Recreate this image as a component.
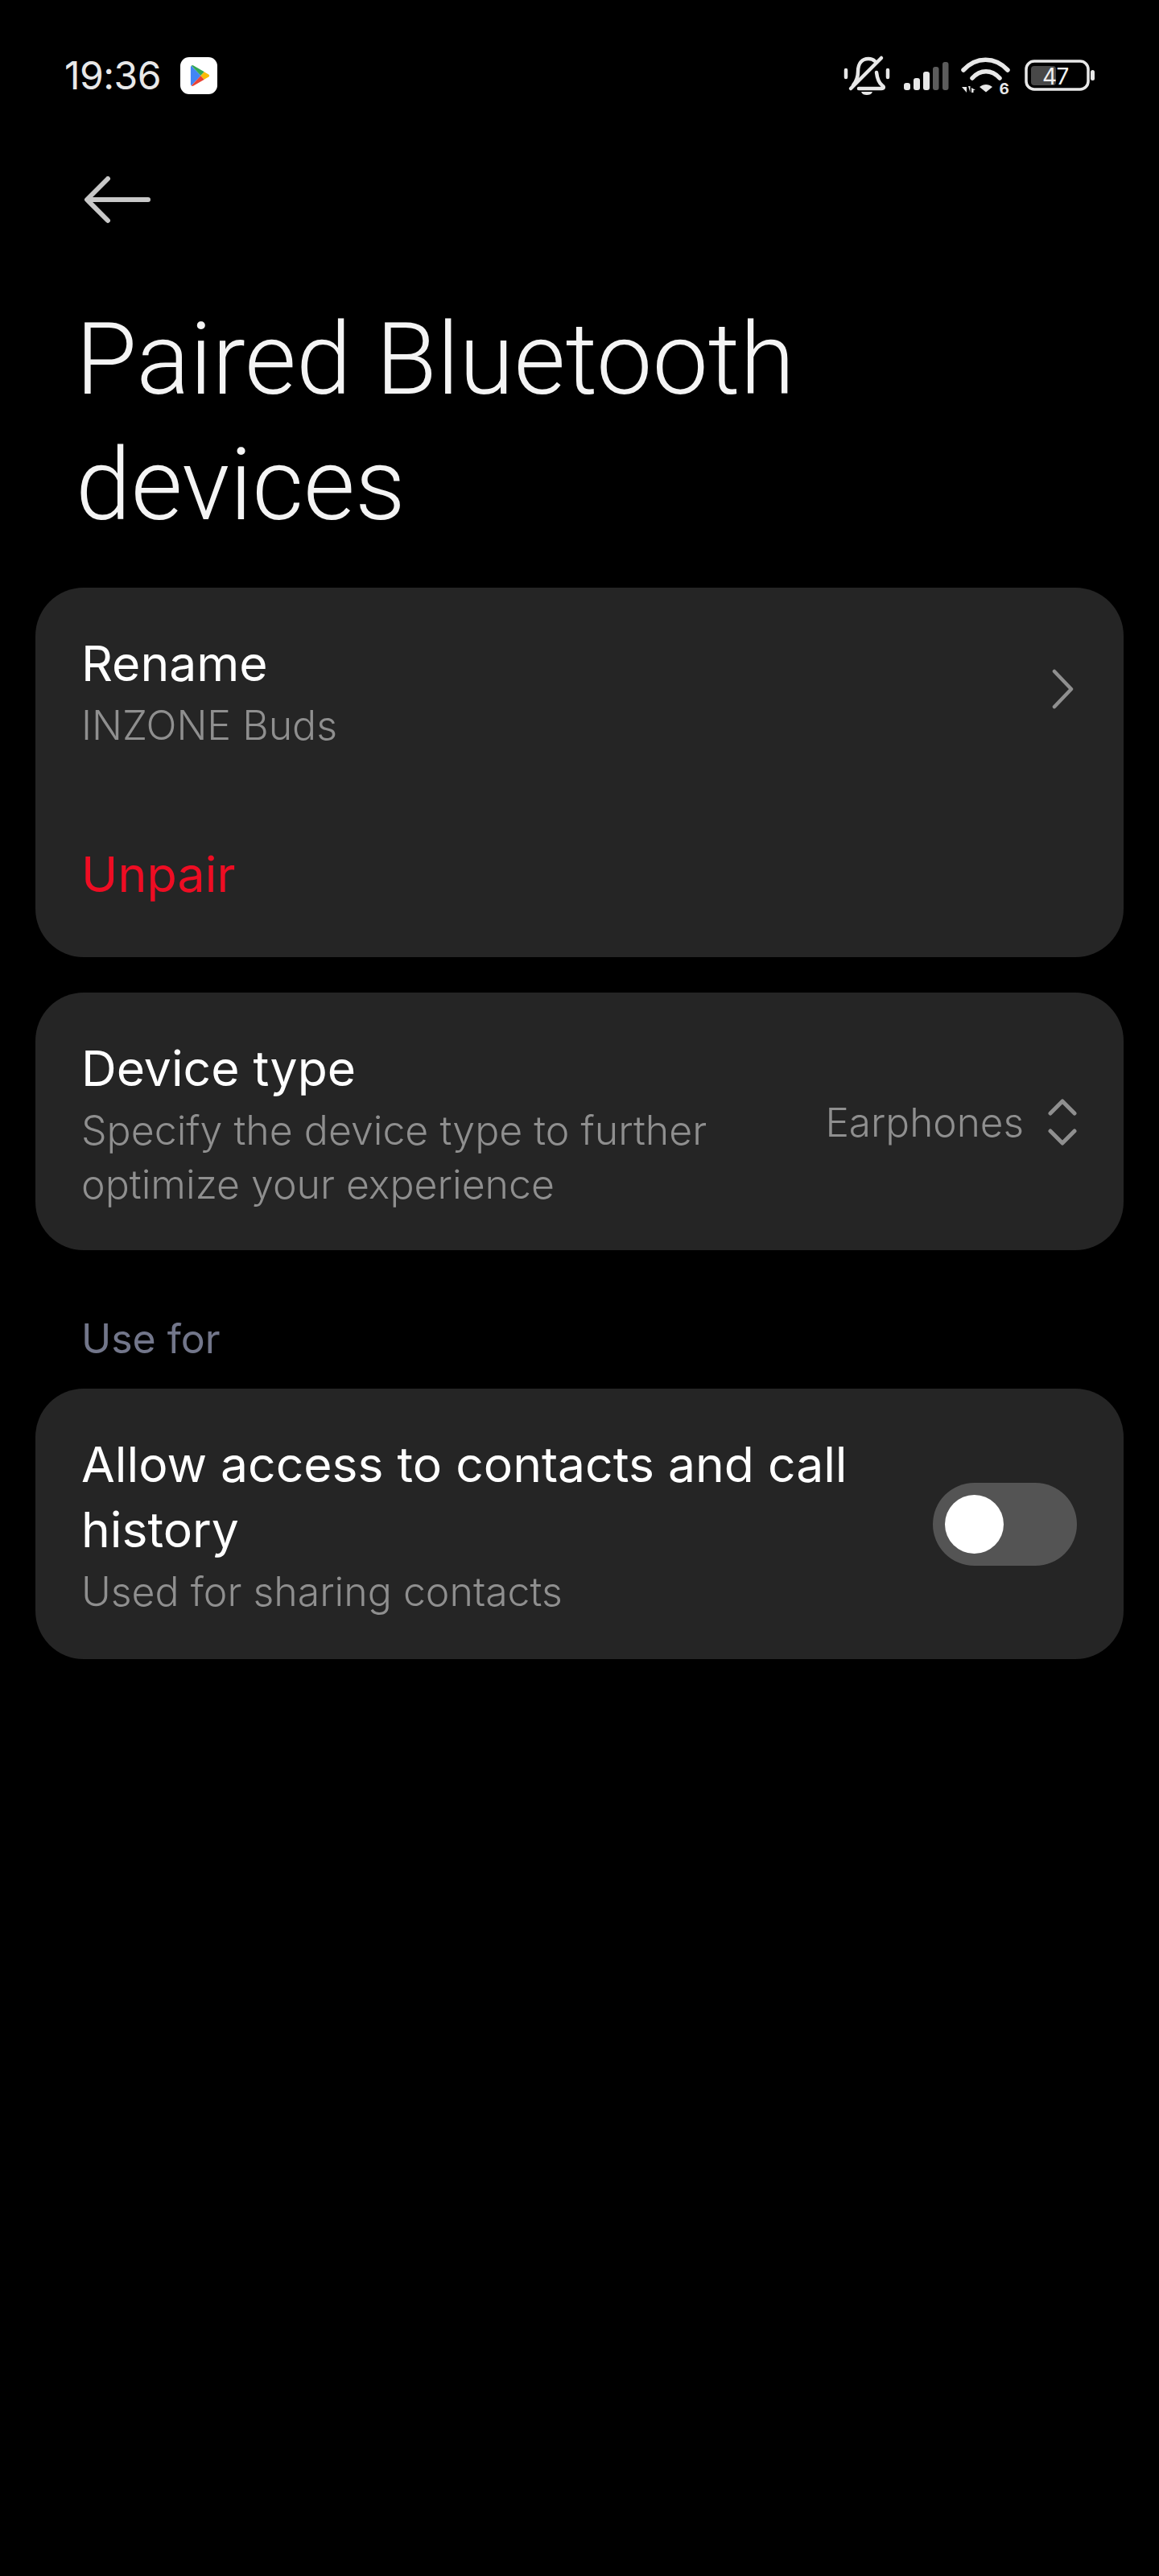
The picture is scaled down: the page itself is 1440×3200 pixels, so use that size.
<style>
:global(body){margin:0;background:#000}
.page{width:1440px;height:3200px;background:#000;color:#fff;font-family:Inter,"Noto Sans",sans-serif;overflow:hidden;box-sizing:border-box}
.status{height:80px;padding:52px 80px 0 80px;display:flex;align-items:flex-start;justify-content:space-between;color:#e8e8e8}
.left{display:flex;align-items:center;gap:24px;height:80px;margin-top:2px}
.time{font-size:48px;font-weight:400;line-height:80px;letter-spacing:-.5px}
.play{width:46px;height:46px;background:#fff;border-radius:11px;display:flex;align-items:center;justify-content:center}
.play svg{margin-left:3px}
.icons{display:flex;width:320px;height:80px}
.back{display:block;margin:87px 0 0 104px}
.title{margin:90px 0 0 94px;font-family:Roboto,sans-serif;font-size:123.700px;font-weight:300;line-height:156px;color:#f4f4f4}
.cards{display:flex;flex-direction:column;margin:49px 44px 0}
.card{background:#252525;border-radius:60px;box-sizing:border-box;padding:0 57px}
.c1{height:459px;padding-top:54px}
.c2{height:320px;margin-top:44px;padding-top:54px}
.c3{height:336px;margin-top:0;padding-top:54px}
.row{display:flex;align-items:center;justify-content:space-between}
.t{font-size:60.600px;line-height:81px;font-weight:400;color:#fff}
.s{font-size:50px;line-height:67px;font-weight:300;color:#8f8f8f;margin-top:3px}
.unpair{font-size:61px;line-height:80px;color:#ee0d23;margin-top:111px}
.val{display:flex;align-items:center;gap:30px;font-size:49.500px;font-weight:300;color:#8f8f8f;margin:0 1px 4px 0}
.chev{margin-right:5px;margin-bottom:8px}
.label{font-size:50px;line-height:64px;font-weight:400;color:#72768a;margin:78px 0 0 57px;height:94px}
.switch{width:179px;height:103px;border-radius:52px;background:#545454;padding:15px;box-sizing:border-box;flex:none;margin:0 1px 4px 0}
.knob{width:73px;height:73px;border-radius:50%;background:#fff}
.grow{flex:1;min-width:0}
</style>

<div class="page">
  <div class="status">
    <div class="left">
      <span class="time">19:36</span>
      <span class="play">
        <svg width="25" height="28" viewBox="0 0 28 30" preserveAspectRatio="none">
          <path d="M2 1.5 L15 15 L2 28.5 Q1 27.5 1 26 V4 Q1 2.5 2 1.5Z" fill="#4285f4"/>
          <path d="M2 1.5 Q3.5 .5 5 1.5 L20 10 L15 15Z" fill="#34a853"/>
          <path d="M2 28.5 Q3.5 29.5 5 28.5 L20 20 L15 15Z" fill="#ea4335"/>
          <path d="M20 10 L26 13.5 Q28 15 26 16.5 L20 20 L15 15Z" fill="#fbbc04"/>
        </svg>
      </span>
    </div>
    <svg class="icons" viewBox="1040 52 320 80">
      <g fill="none" stroke="#e8e8e8" stroke-width="4.500" stroke-linecap="round" stroke-linejoin="round">
        <path d="M1051 87v9M1103 87v9"/>
        <path d="M1060 106c4-5 6-10 6-17c0-10 5-16 13-16c3 0 6 1 8 3M1089 90c1 8 3 13 7 16c3 2 2 4-1 4H1067"/>
        <path d="M1095 72L1057 110"/>
      </g>
      <path d="M1070 114h14c-1 3-4 4-7 4s-6-1-7-4z" fill="#e8e8e8"/>
      <rect x="1123" y="103" width="8" height="9" rx="3" fill="#e8e8e8"/>
      <rect x="1135" y="97" width="8" height="15" rx="3" fill="#e8e8e8"/>
      <rect x="1147" y="89" width="8" height="23" rx="3" fill="#e8e8e8"/>
      <rect x="1159" y="83" width="7.500" height="29" rx="3" fill="#5c5c5c"/>
      <rect x="1171" y="77" width="7.500" height="35" rx="3" fill="#5c5c5c"/>
      <g fill="none" stroke="#e8e8e8" stroke-width="5.500" stroke-linecap="round">
        <path d="M1197 87c16-17 39-17 55 0"/>
        <path d="M1208 97c10-11 24-11 34 0"/>
      </g>
      <path d="M1217 108c5-4 11-4 16 0l-8 6.500z" fill="#e8e8e8"/>
      <path d="M1195 108h6v7zM1203 107h2.500v8zM1207 115v-6l5 3h-2.500v3z" fill="#e8e8e8"/>
      <text x="1241.500" y="117" font-size="19" font-weight="700" fill="#e8e8e8" font-family="Inter">6</text>
      <rect x="1275" y="76" width="77" height="35" rx="10" fill="none" stroke="#e8e8e8" stroke-width="3.500"/>
      <rect x="1281" y="82" width="31" height="24" rx="4" fill="#484848"/>
      <rect x="1355" y="87" width="5" height="13" rx="2.500" fill="#e8e8e8"/>
      <text x="1295" y="105" font-size="28" fill="#f0f0f0" font-family="Inter" letter-spacing="-.5">47</text>
    </svg>
  </div>

  <svg class="back" width="84" height="60" viewBox="0 0 84 60" fill="none" stroke="#c8c8c8" stroke-width="6" stroke-linecap="round" stroke-linejoin="round">
    <path d="M80 29H6M30 3L4 29l26 26"/>
  </svg>

  <h1 class="title">Paired Bluetooth<br/>devices</h1>

  <div class="cards">
    <section class="card c1">
      <div class="row">
        <div class="grow">
          <div class="t">Rename</div>
          <div class="s">INZONE Buds</div>
        </div>
        <svg width="27" height="50" viewBox="0 0 27 50" fill="none" stroke="#8f8f8f" stroke-width="4.500" stroke-linecap="round" stroke-linejoin="round" class="chev">
          <path d="M3 3l21 22L3 47"/>
        </svg>
      </div>
      <div class="unpair">Unpair</div>
    </section>

    <section class="card c2">
      <div class="row">
        <div class="grow">
          <div class="t">Device type</div>
          <div class="s">Specify the device type to further<br/>optimize your experience</div>
        </div>
        <div class="val">
          <span>Earphones</span>
          <svg width="36" height="58" viewBox="0 0 36 58" fill="none" stroke="#8f8f8f" stroke-width="5" stroke-linecap="round" stroke-linejoin="round">
            <path d="M3 18L18 3l15 15M3 40l15 15 15-15"/>
          </svg>
        </div>
      </div>
    </section>

    <div class="label">Use for</div>

    <section class="card c3">
      <div class="row">
        <div class="grow">
          <div class="t">Allow access to contacts and call<br/>history</div>
          <div class="s">Used for sharing contacts</div>
        </div>
        <div class="switch"><div class="knob"></div></div>
      </div>
    </section>
  </div>
</div>
